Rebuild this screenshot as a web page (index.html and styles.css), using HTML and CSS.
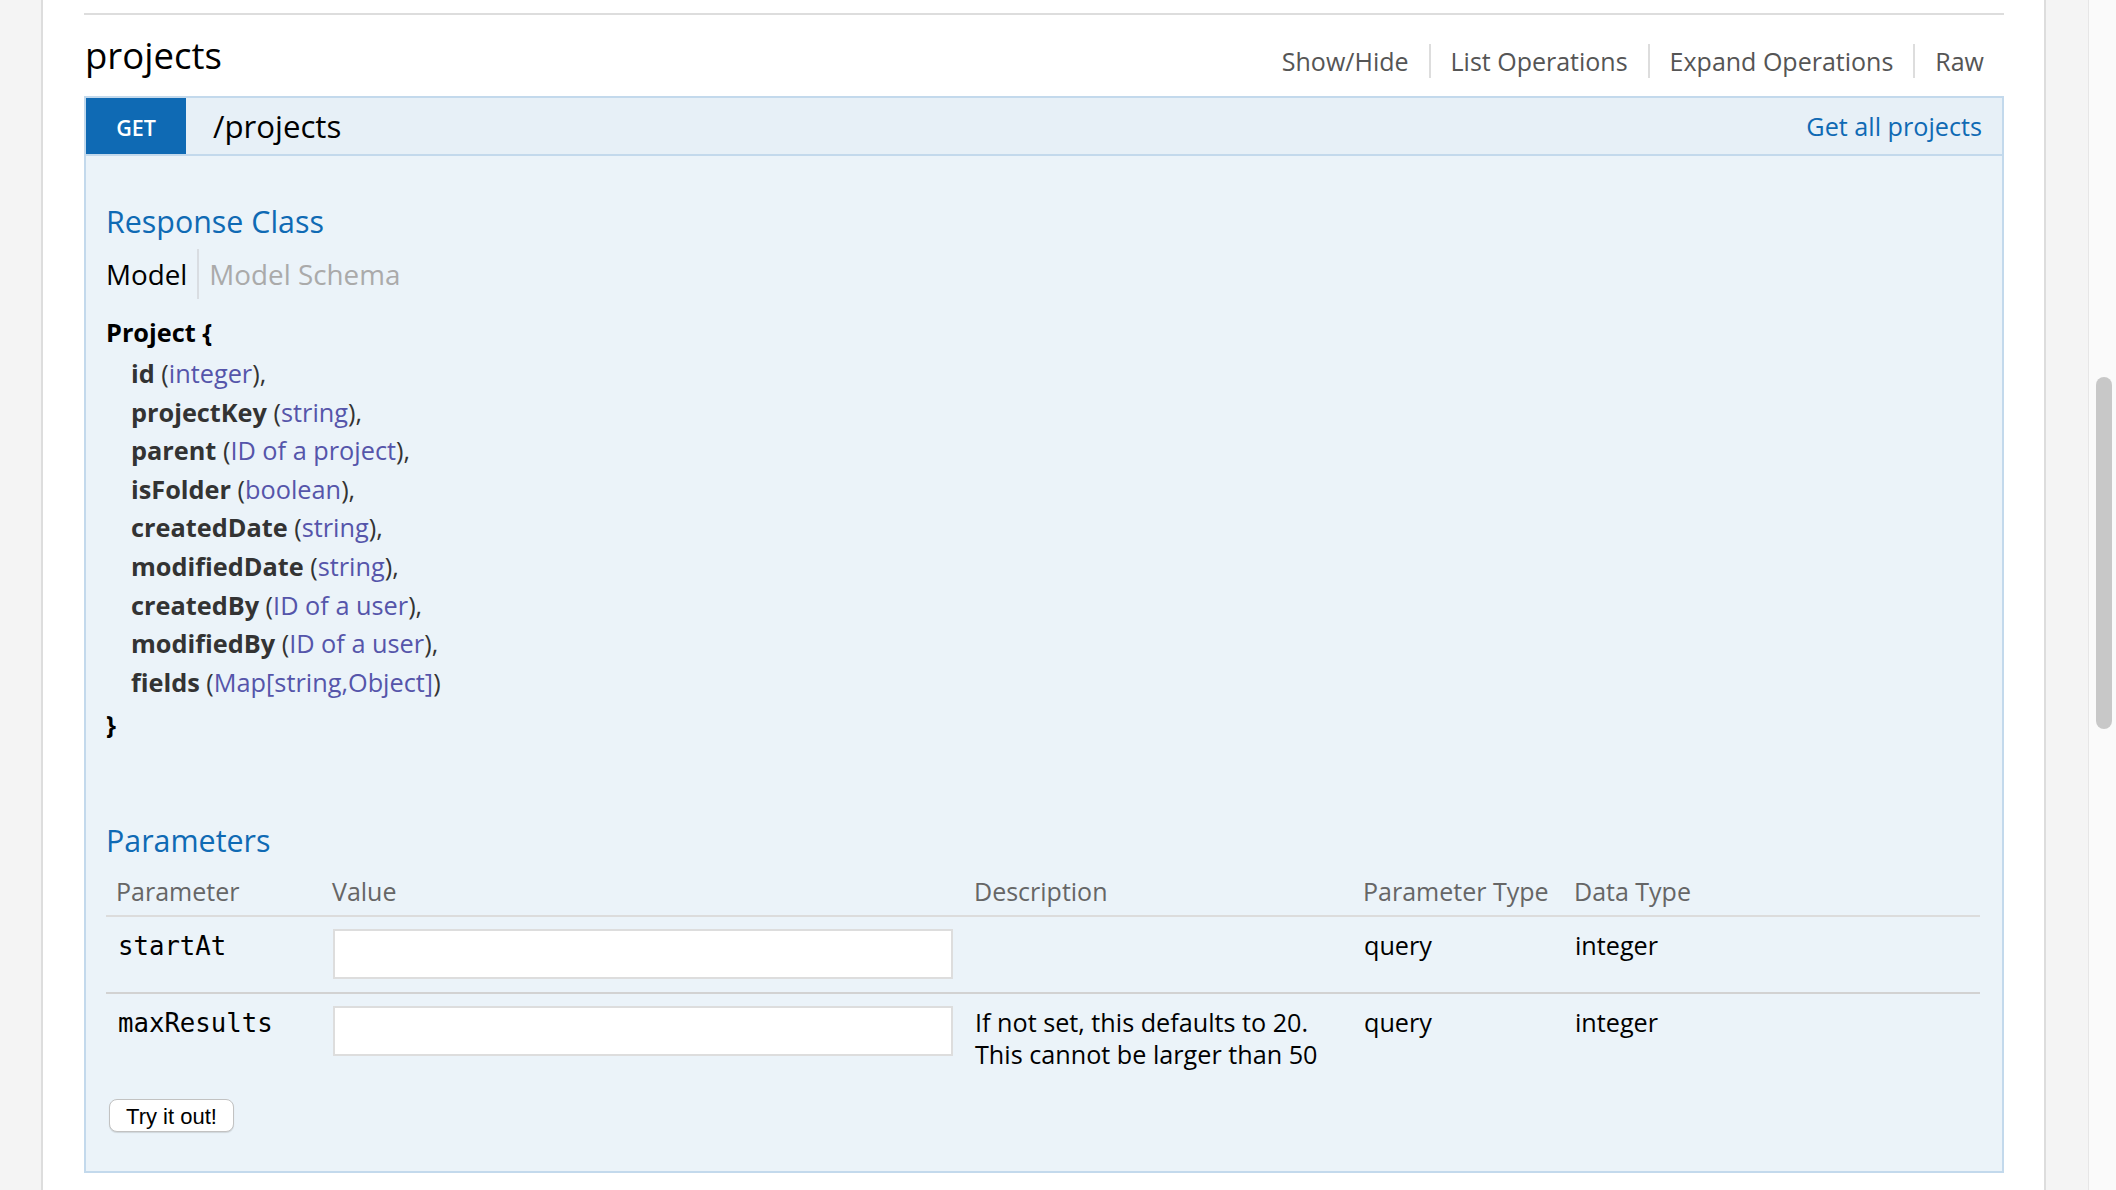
FILE: index.html
```html
<!DOCTYPE html>
<html lang="en">
<head>
<meta charset="utf-8">
<title>projects</title>
<link rel="stylesheet" href="styles.css">
</head>
<body>
<div class="page">
  <div class="gutter gutter-left"></div>
  <main class="main">
    <section class="resource">
      <div class="resource-heading">
        <h2 class="resource-title">projects</h2>
        <ul class="resource-options">
          <li>Show/Hide</li>
          <li>List Operations</li>
          <li>Expand Operations</li>
          <li>Raw</li>
        </ul>
      </div>
      <div class="operation">
        <div class="op-heading">
          <span class="http-method">GET</span>
          <span class="op-path">/projects</span>
          <span class="op-summary">Get all projects</span>
        </div>
        <div class="op-content">
          <h4 class="section-title">Response Class</h4>
          <ul class="sig-nav">
            <li class="selected">Model</li>
            <li>Model Schema</li>
          </ul>
          <div class="model">
            <div class="model-name">Project {</div>
            <div class="props">
              <div class="prop"><span class="prop-name">id</span> (<span class="prop-type">integer</span>),</div>
              <div class="prop"><span class="prop-name">projectKey</span> (<span class="prop-type">string</span>),</div>
              <div class="prop"><span class="prop-name">parent</span> (<span class="prop-type">ID of a project</span>),</div>
              <div class="prop"><span class="prop-name">isFolder</span> (<span class="prop-type">boolean</span>),</div>
              <div class="prop"><span class="prop-name">createdDate</span> (<span class="prop-type">string</span>),</div>
              <div class="prop"><span class="prop-name">modifiedDate</span> (<span class="prop-type">string</span>),</div>
              <div class="prop"><span class="prop-name">createdBy</span> (<span class="prop-type">ID of a user</span>),</div>
              <div class="prop"><span class="prop-name">modifiedBy</span> (<span class="prop-type">ID of a user</span>),</div>
              <div class="prop"><span class="prop-name">fields</span> (<span class="prop-type">Map[string,Object]</span>)</div>
            </div>
            <div class="model-name model-close">}</div>
          </div>
          <h4 class="section-title params-title">Parameters</h4>
          <table class="params">
            <colgroup>
              <col class="c-name"><col class="c-value"><col class="c-desc"><col class="c-ptype"><col class="c-dtype">
            </colgroup>
            <thead>
              <tr><th>Parameter</th><th>Value</th><th>Description</th><th>Parameter Type</th><th>Data Type</th></tr>
            </thead>
            <tbody>
              <tr class="row-first">
                <td class="code">startAt</td>
                <td class="value"><input class="param-input" type="text"></td>
                <td></td>
                <td>query</td>
                <td>integer</td>
              </tr>
              <tr>
                <td class="code">maxResults</td>
                <td class="value"><input class="param-input" type="text"></td>
                <td>If not set, this defaults to 20.<br>This cannot be larger than 50</td>
                <td>query</td>
                <td>integer</td>
              </tr>
            </tbody>
          </table>
          <div class="actions"><button class="try-btn" type="button">Try it out!</button></div>
        </div>
      </div>
    </section>
  </main>
  <div class="gutter gutter-right"></div>
  <div class="scrollbar"><div class="thumb"></div></div>
</div>
</body>
</html>
```

FILE: styles.css
```css
html, body {
  margin: 0;
  padding: 0;
  height: 1190px;
  overflow: hidden;
  background: #fff;
}

.page {
  display: flex;
  height: 1190px;
  font-family: "Open Sans", "Noto Sans", sans-serif;
  color: #000;
}

.gutter {
  background: #f4f4f4;
  flex: none;
}
.gutter-left {
  width: 41px;
  border-right: 2px solid #dddddd;
}
.gutter-right {
  width: 42px;
  border-left: 2px solid #dddddd;
}

.scrollbar {
  flex: none;
  width: 28px;
  box-sizing: border-box;
  background: #fafafa;
  border-left: 1px solid #e6e6e6;
  padding: 377px 0 0 7px;
}
.thumb {
  width: 16px;
  height: 352px;
  border-radius: 8px;
  background: #c8c8c8;
}

.main {
  flex: 1;
  min-width: 0;
  background: #fff;
  padding: 13px 40px 0 41px;
}

.resource {
  border-top: 2px solid #dddddd;
}

.resource-heading {
  display: flex;
  justify-content: space-between;
  align-items: flex-start;
  padding-top: 15px;
}

.resource-title {
  margin: 0 0 0 1px;
  font-size: 36.5px;
  line-height: 50px;
  font-weight: 400;
  color: #000;
}

.resource-options {
  display: flex;
  list-style: none;
  margin: 14px 0 0;
  padding: 0;
}
.resource-options li {
  font-size: 25px;
  line-height: 34px;
  color: #555;
  padding: 0 20px;
}
.resource-options li + li {
  border-left: 2px solid #dddddd;
}

.operation {
  margin-top: 16px;
}

.op-heading {
  display: flex;
  height: 56px;
  border: 2px solid #c3d9ec;
  background: #e7f0f7;
}

.http-method {
  width: 100px;
  height: 56px;
  box-sizing: border-box;
  padding-top: 4px;
  line-height: 52px;
  background: #0f6ab4;
  color: #fff;
  text-align: center;
  font-size: 21.5px;
  font-weight: 600;
}

.op-path {
  margin-left: 27px;
  font-size: 31.2px;
  line-height: 56px;
  color: #000;
}

.op-summary {
  margin-left: auto;
  padding-right: 20px;
  font-size: 25.2px;
  line-height: 56px;
  color: #0f6ab4;
}

.op-content {
  border: 2px solid #c3d9ec;
  border-top: none;
  background: #ebf3f9;
  padding: 46px 22px 39px 20px;
}

.section-title {
  margin: 0;
  font-size: 30.4px;
  line-height: 40px;
  font-weight: 400;
  color: #0f6ab4;
}

.sig-nav {
  display: flex;
  list-style: none;
  margin: 7px 0 0;
  padding: 0;
}
.sig-nav li {
  font-size: 27.8px;
  line-height: 50px;
  color: #aaaaaa;
  padding: 0 10px;
}
.sig-nav li:first-child {
  padding-left: 0;
}
.sig-nav li + li {
  border-left: 2px solid #d9dde2;
}
.sig-nav li.selected {
  color: #000;
}

.model {
  margin-top: 14px;
  font-size: 25.3px;
  line-height: 38.6px;
  color: #333;
}
.model-name {
  font-weight: 700;
  color: #000;
}
.model-close {
  margin-top: 4px;
}
.props {
  margin-top: 2.4px;
  padding-left: 25px;
}
.prop-name {
  font-weight: 700;
  color: #333;
}
.prop-type {
  color: #5555aa;
}

.params-title {
  margin-top: 77px;
}

.params {
  margin-top: 13px;
  width: 1874px;
  table-layout: fixed;
  border-collapse: separate;
  border-spacing: 0;
}
.c-name { width: 216px; }
.c-value { width: 642px; }
.c-desc { width: 389px; }
.c-ptype { width: 211px; }
.c-dtype { width: 416px; }

.params th {
  text-align: left;
  font-weight: 400;
  font-size: 25px;
  line-height: 34px;
  color: #666;
  padding: 0 0 7px 10px;
  border-bottom: 2px solid #dcdcdc;
}

.params td {
  vertical-align: top;
  font-size: 25.2px;
  line-height: 32px;
  color: #000;
  padding: 12px 0 13px 11px;
}
.params .row-first td {
  border-bottom: 2px solid #d2d2d2;
}
.params td.code {
  font-family: "DejaVu Sans Mono", "Liberation Mono", monospace;
  font-size: 25.7px;
  padding-top: 13px;
  padding-left: 12px;
}

.param-input {
  display: block;
  box-sizing: border-box;
  width: 620px;
  height: 50px;
  margin: 0;
  border: 2px solid #dddddd;
  background: #fff;
  padding: 0;
}

.actions {
  margin-top: 16px;
}

.try-btn {
  display: block;
  margin-left: 3px;
  width: 125px;
  height: 33px;
  box-sizing: border-box;
  padding: 2px 0 0;
  border: 1px solid #c2c2c2;
  border-radius: 8px;
  background: #fff;
  box-shadow: 0 1px 1px rgba(0, 0, 0, 0.12);
  font-family: "Liberation Sans", Arial, sans-serif;
  font-size: 22px;
  line-height: 29px;
  color: #000;
  text-align: center;
}
```
